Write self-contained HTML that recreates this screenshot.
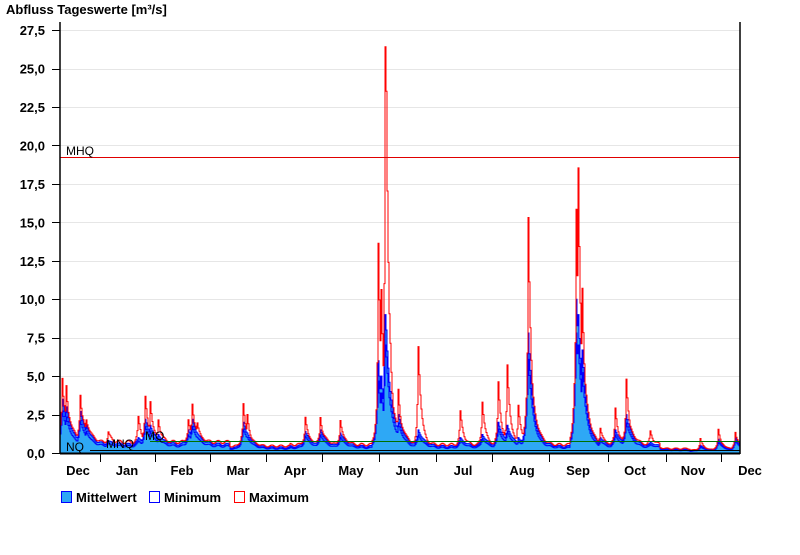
<!DOCTYPE html>
<html><head><meta charset="utf-8"><style>
body{margin:0;background:#fff;width:800px;height:550px;overflow:hidden;font-family:"Liberation Sans",Arial,sans-serif}
svg text{font-family:"Liberation Sans",Arial,sans-serif}
</style></head><body>
<svg id="s" width="800" height="550" xmlns="http://www.w3.org/2000/svg">
<text x="6" y="14" font-size="13" font-weight="bold">Abfluss Tageswerte [m³/s]</text>
<g id="grid" stroke="#e6e6e6" stroke-width="1"></g>
<g id="yl" font-size="13" font-weight="bold" text-anchor="end"></g>
<path id="mean" fill="#2ea8f5" stroke="none"/>
<path id="meanl" fill="none" stroke="#0000ff" stroke-width="1"/>
<path id="minl" fill="none" stroke="#0000ff" stroke-width="1"/>
<path id="maxl" fill="none" stroke="#ff0000" stroke-width="1"/>
<line x1="60" y1="157.5" x2="740" y2="157.5" stroke="#e00000" stroke-width="1"/>
<text x="66" y="155" font-size="12">MHQ</text>
<line x1="150" y1="441.5" x2="740" y2="441.5" stroke="#007000" stroke-width="1"/>
<text x="145" y="440" font-size="12">MQ</text>
<line x1="90" y1="450.5" x2="740" y2="450.5" stroke="#000" stroke-width="1"/>
<text x="66" y="451" font-size="12">NQ</text>
<text x="106" y="448" font-size="12">MNQ</text>
<line x1="60" y1="22" x2="60" y2="454" stroke="#000" stroke-width="1.5"/>
<line x1="740" y1="22" x2="740" y2="454" stroke="#000" stroke-width="1.5"/>
<line x1="60" y1="453.5" x2="740" y2="453.5" stroke="#000" stroke-width="2"/>
<g id="xt" stroke="#000" stroke-width="1"></g>
<g font-size="13" font-weight="bold" text-anchor="middle">
<text x="78" y="475">Dec</text><text x="127" y="475">Jan</text><text x="182" y="475">Feb</text><text x="238" y="475">Mar</text><text x="295" y="475">Apr</text><text x="351" y="475">May</text><text x="407" y="475">Jun</text><text x="463" y="475">Jul</text><text x="522" y="475">Aug</text><text x="578" y="475">Sep</text><text x="635" y="475">Oct</text><text x="693" y="475">Nov</text><text x="750" y="475">Dec</text>
</g>
<g font-size="13" font-weight="bold">
<rect x="61.5" y="491.5" width="10" height="11" fill="#2ea8f5" stroke="#0000ff"/><text x="76" y="502">Mittelwert</text>
<rect x="149.5" y="491.5" width="10" height="11" fill="#fff" stroke="#0000ff"/><text x="164" y="502">Minimum</text>
<rect x="234.5" y="491.5" width="10" height="11" fill="#fff" stroke="#ff0000"/><text x="249" y="502">Maximum</text>
</g>
</svg>
<script>
var Y=function(v){return 453-v*15.38;};
var g=document.getElementById('grid'),yl=document.getElementById('yl'),h='',l='';
for(var i=0;i<=11;i++){var v=i*2.5,y=Y(v);h+='<line x1="60" x2="740" y1="'+(Math.round(y)+.5)+'" y2="'+(Math.round(y)+.5)+'"/>';
l+='<text x="45" y="'+(y+5)+'">'+v.toFixed(1).replace('.',',')+'</text><line x1="52" x2="60" y1="'+(Math.round(y)+.5)+'" y2="'+(Math.round(y)+.5)+'" stroke="#000"/>';}
g.innerHTML=h;yl.innerHTML=l;
var t='';[100,155,210,266,322,379,436,492,549,608,666,721].forEach(function(x){t+='<line x1="'+x+'.5" x2="'+x+'.5" y1="453" y2="462"/>';});
document.getElementById('xt').innerHTML=t;
var P=[[62,4.7,3.5],[66,4.2,3.0],[80,3.6,2.7],[86,2.0,1.8],[108,1.2,0.8],[138,2.2,1.0],[145,3.5,2.2],[150,3.2,1.8],[158,2,1.2],[188,2,1.5],[192,3,2.2],[197,1.8,1.3],[243,3.1,2],[247,2.4,1.3],[305,2.2,1.4],[320,2.2,1.5],[340,2,1.3],[378,13.5,6],[381,10.5,5],[385,26.3,9],[386,23.4,8],[390,7,4],[398,4,2.5],[418,6.8,1.5],[460,2.6,1],[482,3.2,1.2],[498,4.5,2],[507,5.6,1.8],[518,3,1],[528,15.2,7.8],[530,6.5,4],[576,15.7,10],[578,18.4,9],[582,10.6,6.7],[600,1.5,1],[615,2.8,1.5],[626,4.7,2.5],[650,1.3,0.7],[700,0.9,0.5],[718,1.5,0.9],[735,1.3,1]];
function base(x){if(x<230)return 0.55;if(x<290)return 0.35;if(x<660)return 0.42;if(x<690)return 0.22;return 0.15;}
var mean=[],mx=[],mn=[];
for(var x=60;x<740;x+=1){var b=base(x)*(1+0.15*Math.sin(x*0.7)),m=b,M=b*1.3;
P.forEach(function(p){var d=x-p[0];if(d>=-6){var f=d<0?Math.exp(d*0.5):Math.exp(-d/(p[2]>4?5:6));m=Math.max(m,b+(p[2]-b)*f);var f2=d<0?Math.exp(d*0.9):Math.exp(-d/3);M=Math.max(M,b*1.3+(p[1]-b)*f2);}});
M=Math.max(M,m*1.15);mean.push([x,m]);mx.push([x,M]);mn.push([x,m*0.78]);}
function step(a){var s='';a.forEach(function(p,i){var y=Y(p[1]).toFixed(1);s+=(i?'L':'M')+p[0]+' '+y+'L'+(p[0]+1)+' '+y;});return s;}
var sm=step(mean);
document.getElementById('mean').setAttribute('d',sm+'L740 453L60 453Z');
document.getElementById('meanl').setAttribute('d',sm);
document.getElementById('minl').setAttribute('d',step(mn));
document.getElementById('maxl').setAttribute('d',step(mx));
</script>
</body></html>
